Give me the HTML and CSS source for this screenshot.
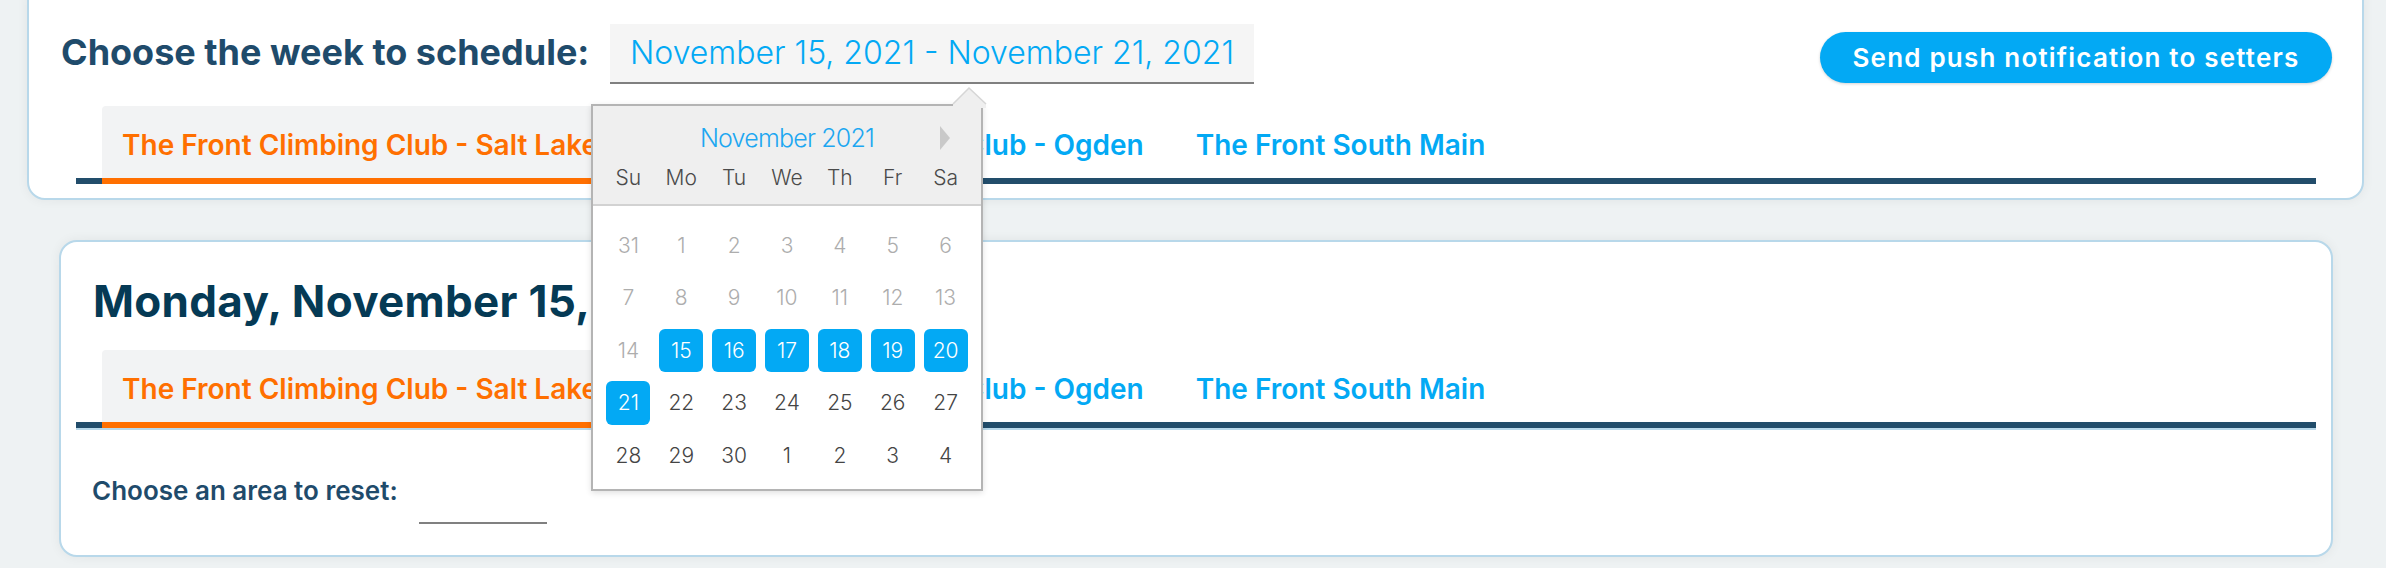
FILE: index.html
```html
<!DOCTYPE html>
<html lang="en">
<head>
<meta charset="utf-8">
<title>Schedule</title>
<link rel="stylesheet" href="styles.css">
</head>
<body>
<section class="card card-top">
  <div class="head-row">
    <div class="week-label">Choose the week to schedule:</div>
    <div class="date-input">November 15, 2021 - November 21, 2021</div>
    <button class="push-btn">Send push notification to setters</button>
  </div>
  <nav class="tabs">
    <div class="tab active">The Front Climbing Club - Salt Lake City</div>
    <div class="tab">The Front Climbing Club - Ogden</div>
    <div class="tab">The Front South Main</div>
  </nav>
</section>

<section class="card card-day">
  <h2 class="day-title">Monday, November 15, 2021</h2>
  <nav class="tabs tabs-day">
    <div class="tab active">The Front Climbing Club - Salt Lake City</div>
    <div class="tab">The Front Climbing Club - Ogden</div>
    <div class="tab">The Front South Main</div>
  </nav>
  <div class="reset-row">
    <div class="reset-label">Choose an area to reset:</div>
    <div class="area-select"></div>
  </div>
</section>

<div class="picker">
  <svg class="picker-arrow" width="36" height="22" viewBox="0 0 36 22">
    <polygon points="1,18 17,2 34,18 34,22 1,22" fill="#efefef"/>
    <polyline points="1,18 17,2 34,18" fill="none" stroke="#d6d6d6" stroke-width="1.5"/>
  </svg>
  <div class="picker-head">
    <div class="month">November 2021</div>
    <span class="next"></span>
    <div class="weekdays">
      <span>Su</span><span>Mo</span><span>Tu</span><span>We</span><span>Th</span><span>Fr</span><span>Sa</span>
    </div>
  </div>
  <div class="days">
    <span class="off">31</span><span class="off">1</span><span class="off">2</span><span class="off">3</span><span class="off">4</span><span class="off">5</span><span class="off">6</span>
    <span class="off">7</span><span class="off">8</span><span class="off">9</span><span class="off">10</span><span class="off">11</span><span class="off">12</span><span class="off">13</span>
    <span class="off">14</span><span class="sel">15</span><span class="sel">16</span><span class="sel">17</span><span class="sel">18</span><span class="sel">19</span><span class="sel">20</span>
    <span class="sel">21</span><span>22</span><span>23</span><span>24</span><span>25</span><span>26</span><span>27</span>
    <span>28</span><span>29</span><span>30</span><span>1</span><span>2</span><span>3</span><span>4</span>
  </div>
</div>
</body>
</html>
```

FILE: styles.css
```css
* { box-sizing: border-box; }

html, body {
  margin: 0;
  padding: 0;
}

body {
  background: #eef2f3;
  font-family: "Inter", "Liberation Sans", sans-serif;
  overflow: hidden;
  height: 568px;
}

.card {
  background: #ffffff;
  border: 2px solid #b8d8ea;
  border-radius: 18px;
  box-shadow: 0 0 12px rgba(0, 0, 0, 0.06);
}

.card-top {
  margin: -20px 22px 0 27px;
  padding: 42px 30px 14px 32px;
}

.head-row {
  display: flex;
  align-items: flex-start;
}

.week-label {
  width: 549px;
  flex-shrink: 0;
  font-size: 36px;
  font-weight: 700;
  line-height: 56px;
  color: #1f4b6b;
  white-space: nowrap;
}

.date-input {
  width: 644px;
  height: 60px;
  background: #f5f5f5;
  border-bottom: 2px solid #808080;
  padding-left: 20px;
  font-size: 32px;
  font-weight: 300;
  line-height: 58px;
  color: #03a9f4;
  white-space: nowrap;
}

.push-btn {
  margin-left: auto;
  margin-top: 8px;
  width: 512px;
  height: 51px;
  border: none;
  border-radius: 26px;
  background: #03a9f4;
  color: #ffffff;
  font-family: "Inter", "Liberation Sans", sans-serif;
  font-size: 26px;
  font-weight: 600;
  letter-spacing: 1.2px;
  box-shadow: 0 1px 3px rgba(0, 0, 0, 0.18);
  padding: 0;
}

.tabs {
  display: flex;
  margin: 22px 16px 0 15px;
  padding-left: 26px;
  border-bottom: 6px solid #224d6b;
}

.tab {
  height: 65px;
  margin-bottom: -6px;
  padding: 7px 20px 0;
  font-size: 28px;
  font-weight: 600;
  line-height: 65px;
  color: #03a9f4;
  white-space: nowrap;
  border-bottom: 6px solid transparent;
  box-sizing: content-box;
}

.tab:nth-child(3) {
  margin-left: 12px;
}

.tab.active {
  background: #f2f3f4;
  color: #ff6f00;
  border-bottom-color: #ff6f00;
  border-radius: 4px 4px 0 0;
}

.card-day {
  margin: 40px 53px 0 59px;
  padding: 33px 15px 31px 15px;
}

.day-title {
  margin: 0 0 0 17px;
  font-size: 44px;
  font-weight: 700;
  line-height: 52px;
  letter-spacing: 0.3px;
  color: #053a55;
}

.tabs-day {
  margin: 23px 0 0 0;
  box-shadow: 0 2px 0 #b8d8ea;
}

.reset-row {
  display: flex;
  align-items: flex-start;
  margin-top: 47px;
  padding-left: 16px;
}

.reset-label {
  font-size: 26px;
  font-weight: 600;
  line-height: 32px;
  color: #1f4b6b;
  white-space: nowrap;
}

.area-select {
  width: 128px;
  height: 49px;
  margin-left: 21px;
  border-bottom: 2px solid #808080;
}

/* date picker popup */
.picker {
  position: absolute;
  left: 591px;
  top: 104px;
  width: 392px;
  height: 387px;
  background: #ffffff;
  border: 2px solid #b4b4b4;
  box-shadow: 0 2px 6px rgba(0, 0, 0, 0.12);
  z-index: 10;
}

.picker-arrow {
  position: absolute;
  left: 359px;
  top: -20px;
}

.picker-head {
  position: relative;
  height: 100px;
  background: #efefef;
  border-bottom: 2px solid #d2d2d2;
  padding-top: 16px;
}

.month {
  text-align: center;
  font-size: 25px;
  font-weight: 300;
  line-height: 32px;
  letter-spacing: -0.8px;
  color: #1da7f1;
}

.next {
  position: absolute;
  left: 347px;
  top: 20px;
  width: 0;
  height: 0;
  border-left: 10px solid #c9c9c9;
  border-top: 12px solid transparent;
  border-bottom: 12px solid transparent;
}

.weekdays {
  display: grid;
  grid-template-columns: repeat(7, 1fr);
  margin: 10px 9px 0;
  font-size: 21px;
  font-weight: 300;
  line-height: 28px;
  color: #4a4a4a;
  text-align: center;
}

.days {
  display: grid;
  grid-template-columns: repeat(7, 1fr);
  grid-auto-rows: 52.5px;
  padding: 13px 9px 0;
  font-size: 21px;
  font-weight: 300;
  color: #444444;
  text-align: center;
}

.days span {
  display: flex;
  align-items: center;
  justify-content: center;
}

.days .off {
  color: #adadad;
}

.days .sel {
  color: #ffffff;
  background: #03a9f4;
  border-radius: 6px;
  margin: 4.5px 4.4px;
}
```
